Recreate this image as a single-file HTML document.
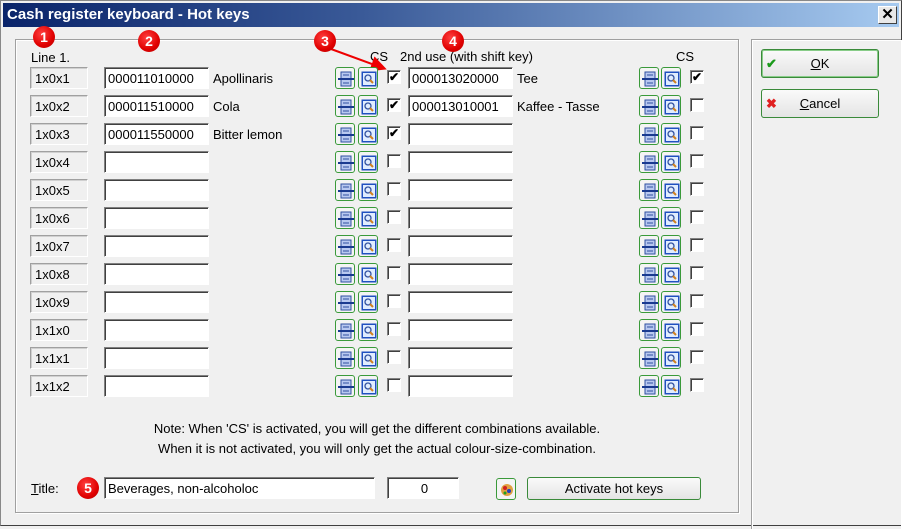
<!DOCTYPE html>
<html><head><meta charset="utf-8"><style>
*{box-sizing:border-box;margin:0;padding:0}
body{width:902px;height:526px;overflow:hidden;background:#f0f0f0;font-family:"Liberation Sans",Arial,sans-serif;font-size:13px;color:#000;position:relative}
.abs{position:absolute}
#win{position:absolute;left:0;top:0;width:902px;height:526px;border:1px solid #888;border-right-color:#404040;border-bottom-color:#404040;background:#f0f0f0}
#tb{position:absolute;left:2px;top:2px;width:896px;height:24px;background:linear-gradient(90deg,#0a246a,#3a5a98 40%,#a6caf0);color:#fff;font-weight:bold;font-size:15px;line-height:24px;padding-left:4px}
#x{position:absolute;left:877px;top:5px;width:19px;height:18px;background:#e8e8e8;border:1px solid;border-color:#fff #404040 #404040 #fff;font-size:15px;font-weight:bold;line-height:15px;text-align:center;color:#000}
.grp{position:absolute;border:1px solid #a0a0a0;box-shadow:1px 1px 0 #fff inset,1px 1px 0 #fff}
.lbl{position:absolute;left:29px;width:58px;height:22px;border:1px solid;border-color:#a0a0a0 #fff #fff #a0a0a0;box-shadow:inset 1px 1px 0 #d0d0d0;background:#f0f0f0;padding:3px 0 0 4px;font-size:13px}
.inp{position:absolute;width:105px;height:22px;background:#fff;border:1px solid;border-color:#808080 #fff #fff #808080;box-shadow:inset 1px 1px 0 #404040;padding:3px 0 0 3px;font-size:13px}
.nm{position:absolute;font-size:13px}
.ic{position:absolute;width:20px;height:22px;border:1px solid #3a9a3a;border-radius:3px;background:#f4f4f4}
.ic svg{position:absolute;left:2px;top:3px}
.cb{position:absolute;width:14px;height:14px;background:#fff;border:1px solid;border-color:#808080 #fff #fff #808080;box-shadow:inset 1px 1px 0 #404040;font-size:12px;line-height:12px;text-align:center;font-weight:bold}
.circ{position:absolute;width:22px;height:22px;border-radius:50%;background:radial-gradient(circle at 40% 35%,#ff4040,#e00000 60%,#b00000);color:#fff;font-weight:bold;font-size:14px;text-align:center;line-height:22px}
.btn{position:absolute;border:1px solid #3a8a3a;border-radius:3px;background:linear-gradient(#fafafa,#e4e4e4);text-align:center;font-size:13px}
</style></head><body>
<div id="win">
<div id="tb">Cash register keyboard - Hot keys</div>
<div id="x">✕</div>
<div class="grp" style="left:14px;top:38px;width:724px;height:474px"></div>
<div class="grp" style="left:750px;top:38px;width:150px;height:490px;border-right:none;border-bottom:none"></div>

<div class="abs" style="left:30px;top:49px">Line 1.</div>
<div class="abs" style="left:369px;top:48px">CS</div>
<div class="abs" style="left:399px;top:48px">2nd use (with shift key)</div>
<div class="abs" style="left:675px;top:48px">CS</div>

<svg class="abs" style="left:0;top:0" width="902" height="526"><defs><marker id="ah" markerWidth="8" markerHeight="8" refX="6" refY="4" orient="auto"><path d="M0,0L8,4L0,8z" fill="#e00"/></marker></defs><line x1="330" y1="48" x2="382" y2="67" stroke="#e00" stroke-width="2" marker-end="url(#ah)"/></svg>

<div class="circ" style="left:32px;top:25px">1</div>
<div class="circ" style="left:137px;top:29px">2</div>
<div class="circ" style="left:313px;top:29px">3</div>
<div class="circ" style="left:441px;top:29px">4</div>
<div class="circ" style="left:76px;top:476px">5</div>

<div class="lbl" style="top:66px">1x0x1</div><div class="inp" style="left:103px;top:66px">000011010000</div><div class="nm" style="left:212px;top:70px">Apollinaris</div>
<div class="lbl" style="top:94px">1x0x2</div><div class="inp" style="left:103px;top:94px">000011510000</div><div class="nm" style="left:212px;top:98px">Cola</div>
<div class="lbl" style="top:122px">1x0x3</div><div class="inp" style="left:103px;top:122px">000011550000</div><div class="nm" style="left:212px;top:126px">Bitter lemon</div>
<div class="lbl" style="top:150px">1x0x4</div><div class="inp" style="left:103px;top:150px"></div>
<div class="lbl" style="top:178px">1x0x5</div><div class="inp" style="left:103px;top:178px"></div>
<div class="lbl" style="top:206px">1x0x6</div><div class="inp" style="left:103px;top:206px"></div>
<div class="lbl" style="top:234px">1x0x7</div><div class="inp" style="left:103px;top:234px"></div>
<div class="lbl" style="top:262px">1x0x8</div><div class="inp" style="left:103px;top:262px"></div>
<div class="lbl" style="top:290px">1x0x9</div><div class="inp" style="left:103px;top:290px"></div>
<div class="lbl" style="top:318px">1x1x0</div><div class="inp" style="left:103px;top:318px"></div>
<div class="lbl" style="top:346px">1x1x1</div><div class="inp" style="left:103px;top:346px"></div>
<div class="lbl" style="top:374px">1x1x2</div><div class="inp" style="left:103px;top:374px"></div>

<div class="inp" style="left:407px;top:66px">000013020000</div><div class="nm" style="left:516px;top:70px">Tee</div>
<div class="inp" style="left:407px;top:94px">000013010001</div><div class="nm" style="left:516px;top:98px">Kaffee - Tasse</div>
<div class="inp" style="left:407px;top:122px"></div>
<div class="inp" style="left:407px;top:150px"></div>
<div class="inp" style="left:407px;top:178px"></div>
<div class="inp" style="left:407px;top:206px"></div>
<div class="inp" style="left:407px;top:234px"></div>
<div class="inp" style="left:407px;top:262px"></div>
<div class="inp" style="left:407px;top:290px"></div>
<div class="inp" style="left:407px;top:318px"></div>
<div class="inp" style="left:407px;top:346px"></div>
<div class="inp" style="left:407px;top:374px"></div>

<svg width="0" height="0" style="position:absolute"><defs>
<g id="i1"><rect x="3" y="1" width="10" height="14" fill="#b8c8f0" stroke="#3050a0"/><rect x="0" y="7" width="16" height="2" fill="#1a3a90"/><line x1="5" y1="4" x2="11" y2="4" stroke="#3050a0"/><line x1="5" y1="12" x2="11" y2="12" stroke="#3050a0"/></g>
<g id="i2"><rect x="0.5" y="0.5" width="15" height="15" fill="#2050c0"/><rect x="2" y="2" width="12" height="12" fill="#e0ecff"/><circle cx="7" cy="7" r="3" fill="none" stroke="#3050a0" stroke-width="1.3"/><line x1="9" y1="9" x2="12" y2="12" stroke="#d08020" stroke-width="2"/></g>
</defs></svg>

<div id="icons">
<div class="ic" style="left:334px;top:66px"><svg width="16" height="16"><use href="#i1"/></svg></div><div class="ic" style="left:357px;top:66px"><svg width="16" height="16"><use href="#i2"/></svg></div>
<div class="ic" style="left:334px;top:94px"><svg width="16" height="16"><use href="#i1"/></svg></div><div class="ic" style="left:357px;top:94px"><svg width="16" height="16"><use href="#i2"/></svg></div>
<div class="ic" style="left:334px;top:122px"><svg width="16" height="16"><use href="#i1"/></svg></div><div class="ic" style="left:357px;top:122px"><svg width="16" height="16"><use href="#i2"/></svg></div>
<div class="ic" style="left:334px;top:150px"><svg width="16" height="16"><use href="#i1"/></svg></div><div class="ic" style="left:357px;top:150px"><svg width="16" height="16"><use href="#i2"/></svg></div>
<div class="ic" style="left:334px;top:178px"><svg width="16" height="16"><use href="#i1"/></svg></div><div class="ic" style="left:357px;top:178px"><svg width="16" height="16"><use href="#i2"/></svg></div>
<div class="ic" style="left:334px;top:206px"><svg width="16" height="16"><use href="#i1"/></svg></div><div class="ic" style="left:357px;top:206px"><svg width="16" height="16"><use href="#i2"/></svg></div>
<div class="ic" style="left:334px;top:234px"><svg width="16" height="16"><use href="#i1"/></svg></div><div class="ic" style="left:357px;top:234px"><svg width="16" height="16"><use href="#i2"/></svg></div>
<div class="ic" style="left:334px;top:262px"><svg width="16" height="16"><use href="#i1"/></svg></div><div class="ic" style="left:357px;top:262px"><svg width="16" height="16"><use href="#i2"/></svg></div>
<div class="ic" style="left:334px;top:290px"><svg width="16" height="16"><use href="#i1"/></svg></div><div class="ic" style="left:357px;top:290px"><svg width="16" height="16"><use href="#i2"/></svg></div>
<div class="ic" style="left:334px;top:318px"><svg width="16" height="16"><use href="#i1"/></svg></div><div class="ic" style="left:357px;top:318px"><svg width="16" height="16"><use href="#i2"/></svg></div>
<div class="ic" style="left:334px;top:346px"><svg width="16" height="16"><use href="#i1"/></svg></div><div class="ic" style="left:357px;top:346px"><svg width="16" height="16"><use href="#i2"/></svg></div>
<div class="ic" style="left:334px;top:374px"><svg width="16" height="16"><use href="#i1"/></svg></div><div class="ic" style="left:357px;top:374px"><svg width="16" height="16"><use href="#i2"/></svg></div>
<div class="ic" style="left:638px;top:66px"><svg width="16" height="16"><use href="#i1"/></svg></div><div class="ic" style="left:660px;top:66px"><svg width="16" height="16"><use href="#i2"/></svg></div>
<div class="ic" style="left:638px;top:94px"><svg width="16" height="16"><use href="#i1"/></svg></div><div class="ic" style="left:660px;top:94px"><svg width="16" height="16"><use href="#i2"/></svg></div>
<div class="ic" style="left:638px;top:122px"><svg width="16" height="16"><use href="#i1"/></svg></div><div class="ic" style="left:660px;top:122px"><svg width="16" height="16"><use href="#i2"/></svg></div>
<div class="ic" style="left:638px;top:150px"><svg width="16" height="16"><use href="#i1"/></svg></div><div class="ic" style="left:660px;top:150px"><svg width="16" height="16"><use href="#i2"/></svg></div>
<div class="ic" style="left:638px;top:178px"><svg width="16" height="16"><use href="#i1"/></svg></div><div class="ic" style="left:660px;top:178px"><svg width="16" height="16"><use href="#i2"/></svg></div>
<div class="ic" style="left:638px;top:206px"><svg width="16" height="16"><use href="#i1"/></svg></div><div class="ic" style="left:660px;top:206px"><svg width="16" height="16"><use href="#i2"/></svg></div>
<div class="ic" style="left:638px;top:234px"><svg width="16" height="16"><use href="#i1"/></svg></div><div class="ic" style="left:660px;top:234px"><svg width="16" height="16"><use href="#i2"/></svg></div>
<div class="ic" style="left:638px;top:262px"><svg width="16" height="16"><use href="#i1"/></svg></div><div class="ic" style="left:660px;top:262px"><svg width="16" height="16"><use href="#i2"/></svg></div>
<div class="ic" style="left:638px;top:290px"><svg width="16" height="16"><use href="#i1"/></svg></div><div class="ic" style="left:660px;top:290px"><svg width="16" height="16"><use href="#i2"/></svg></div>
<div class="ic" style="left:638px;top:318px"><svg width="16" height="16"><use href="#i1"/></svg></div><div class="ic" style="left:660px;top:318px"><svg width="16" height="16"><use href="#i2"/></svg></div>
<div class="ic" style="left:638px;top:346px"><svg width="16" height="16"><use href="#i1"/></svg></div><div class="ic" style="left:660px;top:346px"><svg width="16" height="16"><use href="#i2"/></svg></div>
<div class="ic" style="left:638px;top:374px"><svg width="16" height="16"><use href="#i1"/></svg></div><div class="ic" style="left:660px;top:374px"><svg width="16" height="16"><use href="#i2"/></svg></div>
</div>

<div class="cb" style="left:386px;top:69px">✔</div><div class="cb" style="left:386px;top:97px">✔</div><div class="cb" style="left:386px;top:125px">✔</div>
<div class="cb" style="left:386px;top:153px"></div><div class="cb" style="left:386px;top:181px"></div><div class="cb" style="left:386px;top:209px"></div>
<div class="cb" style="left:386px;top:237px"></div><div class="cb" style="left:386px;top:265px"></div><div class="cb" style="left:386px;top:293px"></div>
<div class="cb" style="left:386px;top:321px"></div><div class="cb" style="left:386px;top:349px"></div><div class="cb" style="left:386px;top:377px"></div>
<div class="cb" style="left:689px;top:69px">✔</div><div class="cb" style="left:689px;top:97px"></div><div class="cb" style="left:689px;top:125px"></div>
<div class="cb" style="left:689px;top:153px"></div><div class="cb" style="left:689px;top:181px"></div><div class="cb" style="left:689px;top:209px"></div>
<div class="cb" style="left:689px;top:237px"></div><div class="cb" style="left:689px;top:265px"></div><div class="cb" style="left:689px;top:293px"></div>
<div class="cb" style="left:689px;top:321px"></div><div class="cb" style="left:689px;top:349px"></div><div class="cb" style="left:689px;top:377px"></div>

<div class="abs" style="left:14px;width:724px;top:418px;text-align:center;font-size:13px;line-height:20px">Note: When 'CS' is activated, you will get the different combinations available.<br>When it is not activated, you will only get the actual colour-size-combination.</div>

<div class="abs" style="left:30px;top:480px"><u>T</u>itle:</div>
<div class="inp" style="left:103px;top:476px;width:271px;height:22px">Beverages, non-alcoholoc</div>
<div class="inp" style="left:386px;top:476px;width:72px;height:22px;text-align:center">0</div>
<div class="ic" style="left:495px;top:477px;width:20px;height:22px"><svg width="16" height="16"><circle cx="8" cy="8" r="6" fill="#e0a040"/><circle cx="6" cy="6" r="2" fill="#d02020"/><circle cx="10" cy="9" r="2" fill="#2040c0"/><circle cx="6" cy="11" r="1.5" fill="#20a020"/></svg></div>
<div class="btn" style="left:526px;top:476px;width:174px;height:23px;line-height:21px">Activate hot keys</div>

<div class="btn" style="left:760px;top:48px;width:118px;height:29px;line-height:27px;box-shadow:inset 0 0 0 1px #8c8"><span style="position:absolute;left:4px;top:0;color:#1a9a1a;font-weight:bold">✔</span><u>O</u>K</div>
<div class="btn" style="left:760px;top:88px;width:118px;height:29px;line-height:27px"><span style="position:absolute;left:4px;top:0;color:#e02020;font-weight:bold">✖</span><u>C</u>ancel</div>
</div>
</body></html>
